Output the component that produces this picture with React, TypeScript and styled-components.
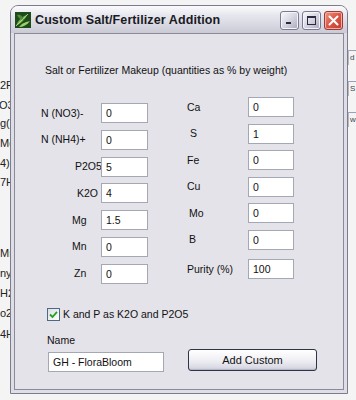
import React from 'react';
import styled, { createGlobalStyle } from 'styled-components';

const GlobalStyle = createGlobalStyle`
  body {
    margin: 0;
    background: #f2f2f2;
    font-family: 'Liberation Sans', Arial, sans-serif;
  }
`;

const Desktop = styled.div`
  display: flex;
  width: 356px;
  height: 400px;
  overflow: hidden;
  background: #f4f4f4;
`;

const SideStrip = styled.div<{ $width: number; $top: number }>`
  flex: none;
  width: ${({ $width }) => $width}px;
  padding-top: ${({ $top }) => $top}px;
  display: flex;
  flex-direction: column;
  font-size: 11px;
  color: #222;
`;

const Fragment = styled.div<{ $gap?: number; $shift?: number }>`
  height: 20px;
  line-height: 20px;
  white-space: nowrap;
  margin-top: ${({ $gap = 0 }) => $gap}px;
  margin-left: ${({ $shift = 0 }) => $shift}px;
`;

const RightFragment = styled.div<{ $gap: number }>`
  margin-top: ${({ $gap }) => $gap}px;
  height: 14px;
  line-height: 14px;
  padding-left: 1px;
  border-top: 1px solid #9aa0b8;
  border-left: 1px solid #b8b8c4;
  white-space: nowrap;
  font-size: 8px;
  color: #444;
`;

const Window = styled.div`
  flex: none;
  position: relative;
  z-index: 1;
  width: 338px;
  height: 389px;
  margin-top: 5px;
  box-sizing: border-box;
  border: 1px solid #7c7c8c;
  border-radius: 8px 8px 0 0;
  background: #dedee6;
  display: flex;
  flex-direction: column;
`;

const TitleBar = styled.div`
  height: 27px;
  flex: none;
  display: flex;
  align-items: center;
  padding: 0 4px 0 4px;
  border-radius: 7px 7px 0 0;
  background: linear-gradient(#fbfbfd 0%, #e6e6ee 35%, #d6d6e0 75%, #cacad6 100%);
`;

const AppIcon = styled.svg`
  width: 16px;
  height: 16px;
  flex: none;
  margin-right: 4px;
`;

const Title = styled.div`
  flex: 1;
  font-size: 12.5px;
  font-weight: bold;
  color: #1a1a22;
  letter-spacing: 0.1px;
`;

const CaptionButtons = styled.div`
  display: flex;
  gap: 3px;
  margin-top: 1px;
`;

const CaptionButton = styled.div<{ $close?: boolean }>`
  width: 19px;
  height: 19px;
  box-sizing: border-box;
  border-radius: 3px;
  border: 1px solid ${({ $close }) => ($close ? '#9a3a3a' : '#7a7a92')};
  box-shadow: inset 0 0 0 1px ${({ $close }) => ($close ? '#f4b0a0' : '#f4f4fa')};
  background: ${({ $close }) =>
    $close
      ? 'linear-gradient(135deg, #f09a88 0%, #dc5a4a 45%, #c4392c 100%)'
      : 'linear-gradient(135deg, #fafafd 0%, #d2d2de 55%, #a8a8bc 100%)'};
  display: flex;
  align-items: center;
  justify-content: center;
  svg {
    display: block;
  }
`;

const Body = styled.div`
  flex: 1;
  display: flex;
  padding: 0 3px 3px 3px;
`;

const Client = styled.div`
  flex: 1;
  border: 1px solid #8a8a98;
  background: #e4e3e9;
  padding: 30px 0 0 30px;
  font-size: 10.5px;
  color: #111;
  display: flex;
  flex-direction: column;
`;

const Heading = styled.div`
  line-height: 13px;
  height: 13px;
  margin-bottom: 20px;
`;

const Columns = styled.div`
  display: flex;
  align-items: flex-start;
  margin-left: -4px;
`;

const FieldColumn = styled.div<{ $labelWidth: number; $gap: number; $top: number }>`
  display: grid;
  grid-template-columns: ${({ $labelWidth }) => $labelWidth}px auto;
  row-gap: ${({ $gap }) => $gap}px;
  margin-top: ${({ $top }) => $top}px;
  align-items: center;
`;

const FieldLabel = styled.div<{ $indent?: number; $extra?: number }>`
  padding-left: ${({ $indent = 0 }) => $indent}px;
  margin-top: ${({ $extra = 0 }) => $extra}px;
  white-space: nowrap;
  line-height: 13px;
`;

const TextBox = styled.div<{ $width: number; $extra?: number }>`
  width: ${({ $width }) => $width}px;
  height: 20px;
  box-sizing: border-box;
  margin-top: ${({ $extra = 0 }) => $extra}px;
  border: 1px solid #a4a8b4;
  background: #fff;
  padding-left: 4px;
  line-height: 18px;
  position: relative;
  font-size: 10.5px;
`;

const Spacer = styled.div<{ $w: number }>`
  width: ${({ $w }) => $w}px;
  flex: none;
`;

const CheckRow = styled.div`
  display: flex;
  align-items: center;
  margin-top: 24px;
  margin-left: 2px;
  height: 13px;
`;

const CheckBox = styled.div`
  width: 13px;
  height: 13px;
  box-sizing: border-box;
  border: 1px solid #4a6a8a;
  background: linear-gradient(135deg, #dcdce4, #ffffff);
  margin-right: 3px;
  display: flex;
  align-items: center;
  justify-content: center;
`;

const BottomRow = styled.div`
  display: flex;
  align-items: flex-end;
  margin-top: 13px;
  margin-left: 2px;
`;

const NameGroup = styled.div`
  display: flex;
  flex-direction: column;
  gap: 5px;
`;

const NameLabel = styled.div`
  line-height: 13px;
`;

const NameBox = styled(TextBox)`
  margin-left: 1px;
`;

const Button = styled.div`
  width: 129px;
  height: 22px;
  box-sizing: border-box;
  margin-left: 24px;
  margin-bottom: 1px;
  border: 1px solid #2e3448;
  border-radius: 3px;
  background: linear-gradient(#ffffff 0%, #f2f2f6 45%, #dcdce6 85%, #c8c8d4 100%);
  box-shadow: inset 0 -1px 0 #b8b8c6;
  display: flex;
  align-items: center;
  justify-content: center;
  font-size: 11px;
  color: #111;
`;

const leftFields = [
  { label: 'N (NO3)-', value: '0', indent: 0 },
  { label: 'N (NH4)+', value: '0', indent: 0 },
  { label: 'P2O5', value: '5', indent: 34 },
  { label: 'K2O', value: '4', indent: 36 },
  { label: 'Mg', value: '1.5', indent: 31 },
  { label: 'Mn', value: '0', indent: 31 },
  { label: 'Zn', value: '0', indent: 33 },
];

const rightFields = [
  { label: 'Ca', value: '0', indent: 0 },
  { label: 'S', value: '1', indent: 3 },
  { label: 'Fe', value: '0', indent: 0 },
  { label: 'Cu', value: '0', indent: 0 },
  { label: 'Mo', value: '0', indent: 2 },
  { label: 'B', value: '0', indent: 2 },
  { label: 'Purity (%)', value: '100', indent: 0, extra: 3 },
];

const LeafIcon = () => (
  <AppIcon viewBox="0 0 16 16">
    <rect x="0" y="0" width="16" height="16" fill="#1f4a1c" />
    <path d="M1 14 C3 8 7 5 13 2 C10 7 7 11 1 14 Z" fill="#6fae4a" />
    <path d="M4 15 C7 11 11 10 15 9 C12 13 8 15 4 15 Z" fill="#9bd06a" />
    <path d="M2 3 C5 2 8 4 9 8 C6 8 3 6 2 3 Z" fill="#4e8c36" />
    <path d="M1 14 L13 2" stroke="#c8e8a0" strokeWidth="0.7" />
  </AppIcon>
);

const App = () => (
  <>
    <GlobalStyle />
    <Desktop>
      <SideStrip $width={10} $top={75}>
        <Fragment>2PO</Fragment>
        <Fragment $shift={-1}>O3)</Fragment>
        <Fragment $gap={-2}>g(N</Fragment>
        <Fragment>Mg</Fragment>
        <Fragment>4)2</Fragment>
        <Fragment $gap={-1}>7H</Fragment>
        <Fragment $gap={51}>Mn</Fragment>
        <Fragment>ny</Fragment>
        <Fragment>H2</Fragment>
        <Fragment>o2H</Fragment>
        <Fragment $gap={1}>4H</Fragment>
      </SideStrip>
      <Window>
        <TitleBar>
          <LeafIcon />
          <Title>Custom Salt/Fertilizer Addition</Title>
          <CaptionButtons>
            <CaptionButton>
              <svg width="9" height="9" viewBox="0 0 9 9">
                <rect x="1" y="6" width="5" height="2" fill="#2a2a40" />
              </svg>
            </CaptionButton>
            <CaptionButton>
              <svg width="11" height="11" viewBox="0 0 11 11">
                <rect x="1.5" y="1.5" width="8" height="8" fill="none" stroke="#2a2a40" />
                <rect x="1" y="1" width="9" height="2" fill="#2a2a40" />
              </svg>
            </CaptionButton>
            <CaptionButton $close>
              <svg width="11" height="11" viewBox="0 0 11 11">
                <path d="M1.5 1.5 L9.5 9.5 M9.5 1.5 L1.5 9.5" stroke="#fff" strokeWidth="2" strokeLinecap="round" />
              </svg>
            </CaptionButton>
          </CaptionButtons>
        </TitleBar>
        <Body>
          <Client>
            <Heading>Salt or Fertilizer Makeup (quantities as % by weight)</Heading>
            <Columns>
              <FieldColumn $labelWidth={60} $gap={6.8} $top={6}>
                {leftFields.map((f) => (
                  <React.Fragment key={f.label}>
                    <FieldLabel $indent={f.indent}>{f.label}</FieldLabel>
                    <TextBox $width={47}>{f.value}</TextBox>
                  </React.Fragment>
                ))}
              </FieldColumn>
              <Spacer $w={39} />
              <FieldColumn $labelWidth={61} $gap={6.5} $top={0}>
                {rightFields.map((f) => (
                  <React.Fragment key={f.label}>
                    <FieldLabel $indent={f.indent} $extra={f.extra}>
                      {f.label}
                    </FieldLabel>
                    <TextBox $width={46} $extra={f.extra}>
                      {f.value}
                    </TextBox>
                  </React.Fragment>
                ))}
              </FieldColumn>
            </Columns>
            <CheckRow>
              <CheckBox>
                <svg width="9" height="9" viewBox="0 0 9 9">
                  <path d="M1 4.5 L3.5 7 L8 1.8" fill="none" stroke="#21a121" strokeWidth="1.8" />
                </svg>
              </CheckBox>
              K and P as K2O and P2O5
            </CheckRow>
            <BottomRow>
              <NameGroup>
                <NameLabel>Name</NameLabel>
                <NameBox $width={116}>GH - FloraBloom</NameBox>
              </NameGroup>
              <Button>Add Custom</Button>
            </BottomRow>
          </Client>
        </Body>
      </Window>
      <SideStrip $width={8} $top={50}>
        <RightFragment $gap={0}>d</RightFragment>
        <RightFragment $gap={16}>S</RightFragment>
        <RightFragment $gap={16}>w</RightFragment>
      </SideStrip>
    </Desktop>
  </>
);

export default App;
